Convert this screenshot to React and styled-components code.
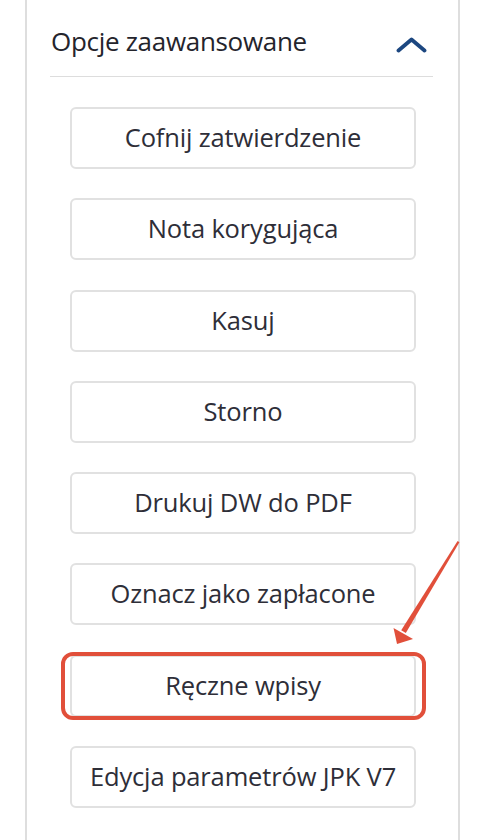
import React from "react";
import styled, { createGlobalStyle } from "styled-components";

const Global = createGlobalStyle`
  html, body { margin: 0; padding: 0; background: #ffffff; }
  body { font-family: "Open Sans", "Noto Sans", sans-serif; }
  * { box-sizing: border-box; }
`;

const Page = styled.div`
  position: relative;
  width: 490px;
  height: 840px;
  overflow: hidden;
`;

const Panel = styled.section`
  margin-left: 25px;
  width: 435px;
  min-height: 840px;
  border-left: 2px solid #dedede;
  border-right: 2px solid #dedede;
  padding: 0 25px 0 23px;
`;

const Header = styled.div`
  display: flex;
  align-items: center;
  justify-content: space-between;
  height: 77px;
  padding: 6px 6px 0 1px;
  border-bottom: 1px solid #dddddd;
`;

const Title = styled.h2`
  margin: 0;
  font-size: 26px;
  font-weight: 400;
  color: #24242c;
  letter-spacing: -0.3px;
`;

const Chevron = styled.svg`
  width: 31px;
  height: 16px;
  margin-top: 8px;
`;

const List = styled.div`
  display: flex;
  flex-direction: column;
  align-items: flex-start;
  padding: 30px 0 0 20px;
  gap: 29.3px;
`;

const Button = styled.button`
  position: relative;
  width: 346px;
  height: 62px;
  background: #ffffff;
  border: 2px solid #e1e1e1;
  border-radius: 6px;
  font-family: "Open Sans", "Noto Sans", sans-serif;
  font-size: 25.5px;
  font-weight: 500;
  color: #2e2e38;
  letter-spacing: -0.15px;
  cursor: pointer;
  padding: 0 2px 2px;
  white-space: nowrap;

  ${(p) =>
    p.$highlighted &&
    `
    &::after {
      content: "";
      position: absolute;
      top: -5px;
      bottom: -5px;
      left: -11px;
      right: -12px;
      border: 4px solid #e14f3a;
      border-radius: 12px;
      pointer-events: none;
    }
  `}
`;

const Arrow = styled.svg`
  position: absolute;
  left: 0;
  top: 0;
  width: 490px;
  height: 840px;
  pointer-events: none;
`;

const items = [
  "Cofnij zatwierdzenie",
  "Nota korygująca",
  "Kasuj",
  "Storno",
  "Drukuj DW do PDF",
  "Oznacz jako zapłacone",
  "Ręczne wpisy",
  "Edycja parametrów JPK V7",
];

export default function App() {
  return (
    <Page>
      <Global />
      <Panel>
        <Header>
          <Title>Opcje zaawansowane</Title>
          <Chevron viewBox="0 0 31 16" aria-hidden="true">
            <path
              d="M2.5 13.5 L15.5 2.5 L28.5 13.5"
              fill="none"
              stroke="#1c4780"
              strokeWidth="3.8"
              strokeLinecap="round"
              strokeLinejoin="round"
            />
          </Chevron>
        </Header>
        <List>
          {items.map((t) => (
            <Button key={t} $highlighted={t === "Ręczne wpisy"}>
              {t}
            </Button>
          ))}
        </List>
      </Panel>
      <Arrow viewBox="0 0 490 840" aria-hidden="true">
        <polygon
          points="459.4,542.3 457.6,541.1 401.2,630.2 405.8,633.0"
          fill="#e14f3a"
        />
        <polygon points="397,644 393.5,628 413,639" fill="#e14f3a" />
      </Arrow>
    </Page>
  );
}
